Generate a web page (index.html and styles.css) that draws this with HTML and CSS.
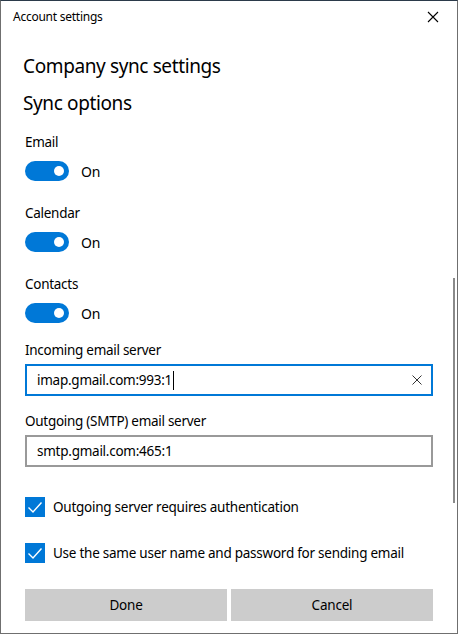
FILE: index.html
```html
<!DOCTYPE html>
<html lang="en">
<head>
<meta charset="utf-8">
<title>Account settings</title>
<link rel="stylesheet" href="styles.css">
</head>
<body>
<div class="window">
  <div class="titlebar">
    <span class="title">Account settings</span>
    <svg class="close" width="12" height="12" viewBox="0 0 12 12"><path d="M1 1 L11 11 M11 1 L1 11" stroke="#000" stroke-width="1.1" fill="none"/></svg>
  </div>
  <div class="content">
    <h1 class="heading">Company sync settings</h1>
    <h2 class="subheading">Sync options</h2>

    <div class="setting">
      <div class="label">Email</div>
      <div class="toggle-row"><span class="toggle"><span class="knob"></span></span><span class="toggle-text">On</span></div>
    </div>
    <div class="setting">
      <div class="label">Calendar</div>
      <div class="toggle-row"><span class="toggle"><span class="knob"></span></span><span class="toggle-text">On</span></div>
    </div>
    <div class="setting">
      <div class="label">Contacts</div>
      <div class="toggle-row"><span class="toggle"><span class="knob"></span></span><span class="toggle-text">On</span></div>
    </div>

    <div class="field">
      <div class="label">Incoming email server</div>
      <div class="input focused"><span class="value">imap.gmail.com:993:1</span><span class="caret"></span>
        <svg class="clear" width="10" height="10" viewBox="0 0 10 10"><path d="M0.5 0.5 L9.5 9.5 M9.5 0.5 L0.5 9.5" stroke="#333" stroke-width="1" fill="none"/></svg>
      </div>
    </div>
    <div class="field second">
      <div class="label">Outgoing (SMTP) email server</div>
      <div class="input"><span class="value">smtp.gmail.com:465:1</span></div>
    </div>

    <div class="check-row first">
      <span class="checkbox"><svg width="20" height="20" viewBox="0 0 20 20"><path d="M3.5 10.5 L8 15 L16.5 5.5" stroke="#fff" stroke-width="1.4" fill="none"/></svg></span>
      <span class="check-text">Outgoing server requires authentication</span>
    </div>
    <div class="check-row">
      <span class="checkbox"><svg width="20" height="20" viewBox="0 0 20 20"><path d="M3.5 10.5 L8 15 L16.5 5.5" stroke="#fff" stroke-width="1.4" fill="none"/></svg></span>
      <span class="check-text">Use the same user name and password for sending email</span>
    </div>

    <div class="buttons">
      <button class="btn">Done</button>
      <button class="btn">Cancel</button>
    </div>
  </div>
  <div class="scrollbar"></div>
</div>
</body>
</html>
```
FILE: styles.css
```css
* { box-sizing: border-box; }
html, body { margin: 0; padding: 0; background: #2b3a4a; }
body { font-family: "Noto Sans", "Open Sans", sans-serif; color: #000; }

.window {
  position: relative;
  width: 458px;
  height: 634px;
  background: #fff;
  border-left: 1px solid #6f6f6f;
  border-right: 1px solid #6f6f6f;
  border-bottom: 1px solid #6f6f6f;
  border-top: 1px solid #2b3a4a;
  overflow: hidden;
}

.titlebar {
  height: 31px;
  display: flex;
  align-items: center;
  justify-content: space-between;
  padding: 0 18px 0 12px;
}
.title { font-size: 12px; letter-spacing: -0.25px; }
.close { display: block; }

.content {
  padding: 0 24px;
  display: flex;
  flex-direction: column;
}

.heading, .subheading {
  margin: 0 0 0 -2px;
  font-size: 19px;
  font-weight: 400;
  line-height: 28px;
  letter-spacing: -0.38px;
}
.heading { margin-top: 20px; }
.subheading { margin-top: 9px; }

.label { font-size: 13.5px; line-height: 20px; letter-spacing: -0.28px; }

.setting { margin-top: 22px; }
.subheading + .setting { margin-top: 15px; }
.setting .label { margin-bottom: 9px; }

.toggle-row { display: flex; align-items: center; height: 20px; }
.toggle {
  position: relative;
  width: 44px;
  height: 20px;
  border-radius: 10px;
  background: #0078d7;
}
.knob {
  position: absolute;
  right: 5px;
  top: 5px;
  width: 10px;
  height: 10px;
  border-radius: 50%;
  background: #fff;
}
.toggle-text { margin-left: 12px; font-size: 14px; letter-spacing: -0.2px; }

.field { margin-top: 17px; }
.field.second { margin-top: 15px; }
.field .label { margin-bottom: 4px; }

.input {
  position: relative;
  display: flex;
  align-items: center;
  width: 408px;
  height: 32px;
  border: 2px solid #999;
  padding: 0 10px;
  font-size: 13.5px;
  letter-spacing: -0.25px;
}
.input.focused { border-color: #0078d7; }
.caret { width: 1px; height: 19px; background: #000; margin-left: 1px; }
.clear { position: absolute; right: 9px; top: 9px; }

.check-row { display: flex; align-items: center; margin-top: 26px; }
.check-row.first { margin-top: 30px; }
.checkbox { width: 20px; height: 20px; background: #0078d7; display: block; flex: none; }
.checkbox svg { display: block; }
.check-text { margin-left: 8px; font-size: 13.5px; letter-spacing: -0.25px; white-space: nowrap; }

.buttons {
  display: flex;
  gap: 4px;
  margin-top: 26px;
}
.btn {
  width: 202px;
  height: 32px;
  background: #ccc;
  border: none;
  font-family: inherit;
  font-size: 13.5px;
  letter-spacing: -0.2px;
  color: #000;
  padding: 0;
}

.scrollbar {
  position: absolute;
  right: 2px;
  top: 277px;
  width: 2px;
  height: 225px;
  background: #8a8a8a;
}
```
